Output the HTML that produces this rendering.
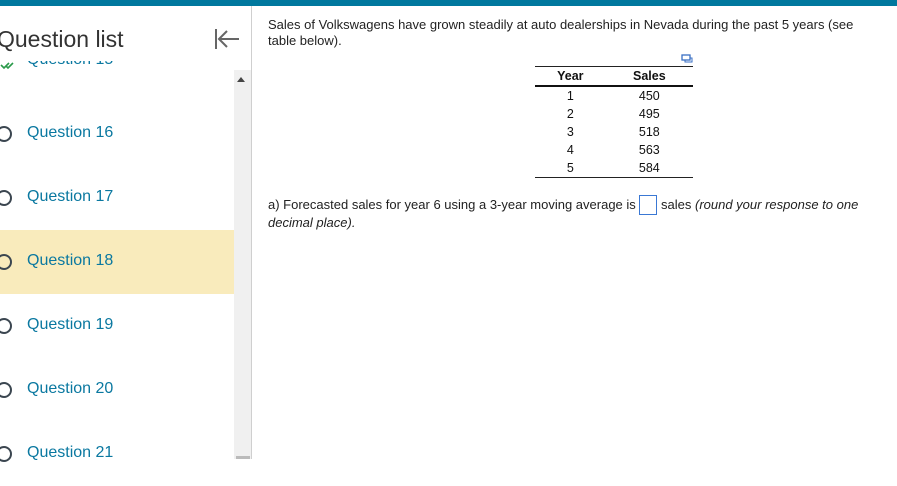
<!DOCTYPE html>
<html><head><style>
body{margin:0;width:897px;height:459px;overflow:hidden;background:#fff;font-family:"Liberation Sans",Arial,sans-serif;position:relative}
.top{position:absolute;left:0;top:0;width:897px;height:6px;background:#00789e}
.side{position:absolute;left:0;top:6px;width:251px;height:453px;border-right:1px solid #cfcfcf}
.title{position:absolute;left:-3px;top:26px;font-size:23px;color:#333}
.sb{position:absolute;left:234px;top:70px;width:17px;height:389px;background:#f0f0f0}
.q{position:absolute;left:0;width:234px;height:64px;overflow:hidden}
.q .c{position:absolute;left:-4px;top:24px;width:12px;height:12px;border:2px solid #3b4650;border-radius:50%}
.q .t{position:absolute;left:27px;top:22px;font-size:16px;color:#0a78a0}
.main{position:absolute;left:268px;font-size:13px;color:#222;line-height:16px}
table{position:absolute;left:535px;top:66px;width:158px;border-collapse:collapse;font-size:12.5px;color:#111}
td,th{text-align:center;padding:0;height:18px;line-height:18px}
</style></head><body>
<div class="top"></div>
<div class="side"></div>
<div class="title">Question list</div>
<svg style="position:absolute;left:213px;top:27px" width="28" height="24"><path d="M3 2V22M6 12H26M14 4L6 12L14 20" stroke="#666" stroke-width="2" fill="none"/></svg>
<div class="sb"></div>
<div style="position:absolute;left:237px;top:77px;width:0;height:0;border-left:4px solid transparent;border-right:4px solid transparent;border-bottom:5px solid #444"></div>
<div style="position:absolute;left:236px;top:456px;width:14px;height:3px;background:#bbb"></div>
<div style="position:absolute;left:0;top:61px;width:234px;height:9px;overflow:hidden"><div style="position:absolute;left:27px;top:-10px;font-size:16px;color:#0a78a0">Question 15</div><svg style="position:absolute;left:0;top:0" width="20" height="9"><path d="M1 4L4 7L9 2M6 5L8 7L13 2" stroke="#2a9a4a" stroke-width="1.6" fill="none"/></svg></div>
<div class="q" style="top:102px"><div class="c"></div><div class="t">Question 16</div></div>
<div class="q" style="top:166px"><div class="c"></div><div class="t">Question 17</div></div>
<div class="q" style="top:230px;background:#f9ebbc"><div class="c"></div><div class="t">Question 18</div></div>
<div class="q" style="top:294px"><div class="c"></div><div class="t">Question 19</div></div>
<div class="q" style="top:358px"><div class="c"></div><div class="t">Question 20</div></div>
<div class="q" style="top:422px"><div class="c"></div><div class="t">Question 21</div></div>
<div class="main" style="top:17px;width:600px">Sales of Volkswagens have grown steadily at auto dealerships in Nevada during the past 5 years (see table below).</div>
<svg style="position:absolute;left:681px;top:54px" width="12" height="10"><rect x="1" y="1" width="8" height="5" fill="none" stroke="#3a6fc4" stroke-width="1.3"/><path d="M4 6V8H11V4H9" fill="none" stroke="#3a6fc4"/></svg>
<table>
<tr style="border-top:1px solid #222;border-bottom:2px solid #111"><th>Year</th><th>Sales</th></tr>
<tr><td>1</td><td>450</td></tr><tr><td>2</td><td>495</td></tr><tr><td>3</td><td>518</td></tr><tr><td>4</td><td>563</td></tr><tr style="border-bottom:1px solid #222"><td>5</td><td>584</td></tr>
</table>
<div class="main" style="top:195px;width:600px">a) Forecasted sales for year 6 using a 3-year moving average is <span style="display:inline-block;width:16px;height:18px;border:1px solid #3a78d4;vertical-align:-6px"></span> sales <i>(round your response to one decimal place).</i></div>
</body></html>
